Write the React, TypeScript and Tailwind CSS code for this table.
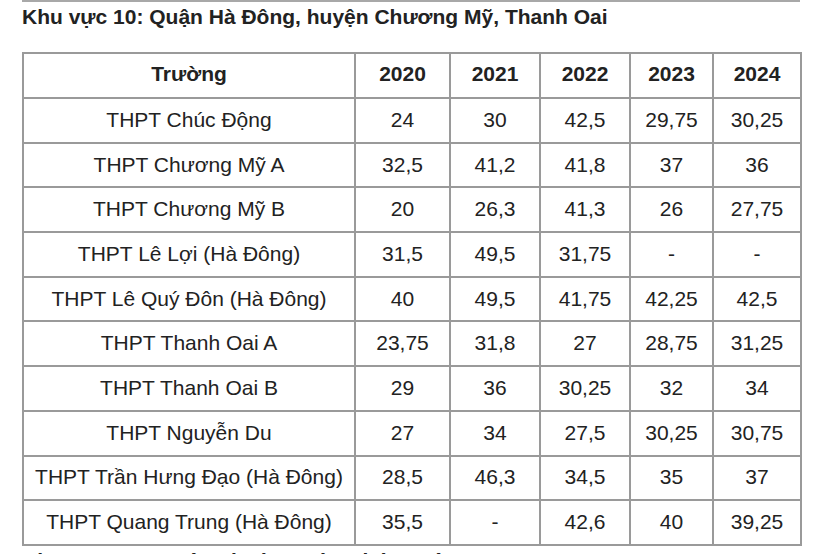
const rows: [string, string, string, string, string, string][] = [
  ["THPT Chúc Động", "24", "30", "42,5", "29,75", "30,25"],
  ["THPT Chương Mỹ A", "32,5", "41,2", "41,8", "37", "36"],
  ["THPT Chương Mỹ B", "20", "26,3", "41,3", "26", "27,75"],
  ["THPT Lê Lợi (Hà Đông)", "31,5", "49,5", "31,75", "-", "-"],
  ["THPT Lê Quý Đôn (Hà Đông)", "40", "49,5", "41,75", "42,25", "42,5"],
  ["THPT Thanh Oai A", "23,75", "31,8", "27", "28,75", "31,25"],
  ["THPT Thanh Oai B", "29", "36", "30,25", "32", "34"],
  ["THPT Nguyễn Du", "27", "34", "27,5", "30,25", "30,75"],
  ["THPT Trần Hưng Đạo (Hà Đông)", "28,5", "46,3", "34,5", "35", "37"],
  ["THPT Quang Trung (Hà Đông)", "35,5", "-", "42,6", "40", "39,25"],
];

const years = ["2020", "2021", "2022", "2023", "2024"];

export default function App() {
  return (
    <div
      className="w-[820px] h-[554px] overflow-hidden bg-white text-[#222] pl-[22px] pr-[20px]"
      style={{ fontFamily: '"Liberation Sans", Arial, sans-serif' }}
    >
      {/* rule above heading */}
      <div className="h-[2px] w-[778px] bg-[#a8a8a8]" />

      <h3 className="mt-[1px] text-[21px] leading-[28px] font-bold whitespace-nowrap">
        Khu vực 10: Quận Hà Đông, huyện Chương Mỹ, Thanh Oai
      </h3>

      <table className="mt-[21px] w-[778px] table-fixed border-collapse text-[21px] leading-[24px] text-center">
        <colgroup>
          <col className="w-[332px]" />
          <col className="w-[95px]" />
          <col className="w-[90px]" />
          <col className="w-[90px]" />
          <col className="w-[83px]" />
          <col className="w-[88px]" />
        </colgroup>
        <thead>
          <tr className="h-[45px]">
            <th className="border-2 border-[#9a9a9a] font-bold pb-[3px]">Trường</th>
            {years.map((y) => (
              <th key={y} className="border-2 border-[#9a9a9a] font-bold pb-[3px]">
                {y}
              </th>
            ))}
          </tr>
        </thead>
        <tbody>
          {rows.map((r) => (
            <tr key={r[0]} className="h-[44.7px]">
              {r.map((c, i) => (
                <td key={i} className="border-2 border-[#9a9a9a] p-0 pb-[1px] whitespace-nowrap">
                  {c}
                </td>
              ))}
            </tr>
          ))}
        </tbody>
      </table>

      <p className="mt-[1px] text-[21px] leading-[28px] font-bold whitespace-nowrap">
        Khu vực 11: Huyện Thường Tín, Phú Xuyên
      </p>
    </div>
  );
}
